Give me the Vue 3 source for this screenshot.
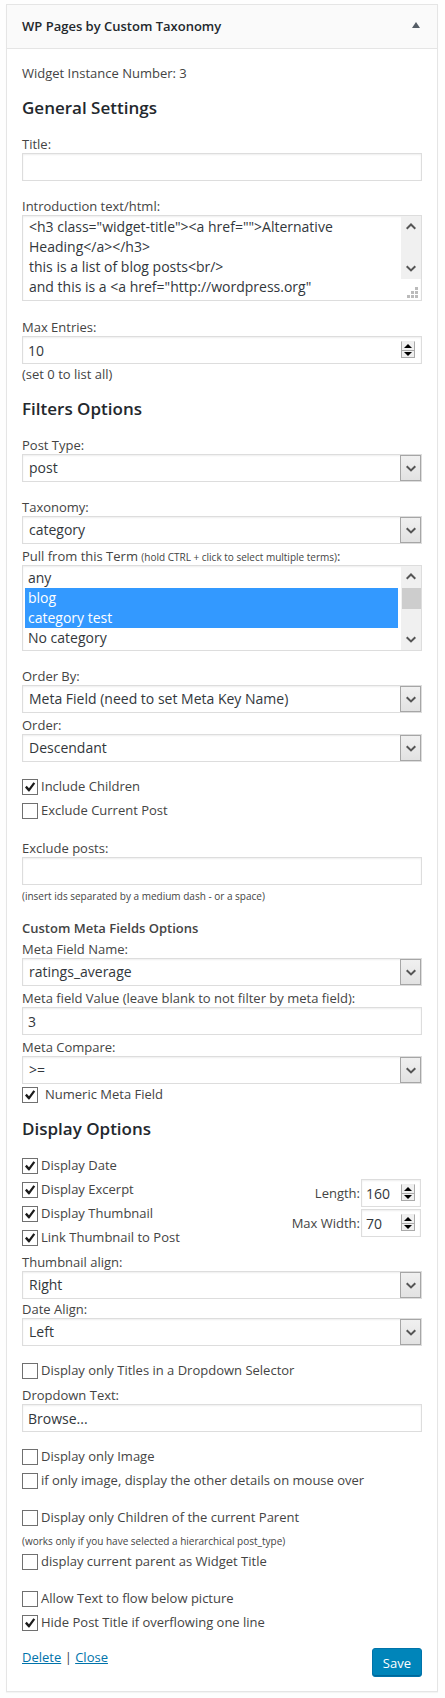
<script setup>
import { h, reactive } from 'vue'

const form = reactive({
  title: '',
  intro: '<h3 class="widget-title"><a href="">Alternative Heading</a></h3>\nthis is a list of blog posts<br/>\nand this is a <a href="http://wordpress.org"',
  maxEntries: 10,
  postType: 'post',
  taxonomy: 'category',
  terms: ['blog', 'category test'],
  orderBy: 'Meta Field (need to set Meta Key Name)',
  order: 'Descendant',
  includeChildren: true,
  excludeCurrent: false,
  excludePosts: '',
  metaName: 'ratings_average',
  metaValue: '3',
  metaCompare: '>=',
  numericMeta: true,
  showDate: true,
  showExcerpt: true,
  showThumb: true,
  linkThumb: true,
  length: 160,
  maxWidth: 70,
  thumbAlign: 'Right',
  dateAlign: 'Left',
  dropdown: false,
  dropdownText: 'Browse...',
  onlyImage: false,
  mouseOver: false,
  onlyChildren: false,
  parentTitle: false,
  flowText: false,
  hideTitle: true
})

const terms = ['any', 'blog', 'category test', 'No category']

const Chevron = (props) =>
  h('svg', { width: 10, height: 7, viewBox: '0 0 10 7', 'aria-hidden': 'true' }, [
    h('path', {
      d: props.up ? 'M0.7 5.7 5 1.5 9.3 5.7' : 'M0.7 1.2 5 5.4 9.3 1.2',
      fill: 'none',
      stroke: '#555',
      'stroke-width': 2
    })
  ])
Chevron.props = { up: Boolean }

const Tick = () =>
  h('svg', { class: 'tick', width: 12, height: 12, viewBox: '0 0 12 12', 'aria-hidden': 'true' }, [
    h('path', { d: 'M1 6.4 2.7 4.8 5 7.2 9.4 1.3 11.2 2.6 5.4 10.4 4.5 10.4Z', fill: '#1c1c1c' })
  ])

const Triangle = (props) =>
  h('svg', { width: 8, height: 4, viewBox: '0 0 8 4', 'aria-hidden': 'true' }, [
    h('path', { d: props.up ? 'M0 4 4 0 8 4Z' : 'M0 0H8L4 4Z', fill: '#000' })
  ])
Triangle.props = { up: Boolean }
</script>

<template>
  <main class="page">
    <section class="widget">
      <header class="widget-top">
        <h2>WP Pages by Custom Taxonomy</h2>
        <button type="button" class="toggle" aria-label="Collapse widget">
          <svg width="8" height="6" viewBox="0 0 8 6" aria-hidden="true"><path d="M0 6 4 0 8 6Z" fill="#555d66" /></svg>
        </button>
      </header>

      <form class="widget-body" @submit.prevent>
        <p>Widget Instance Number: 3</p>

        <h3>General Settings</h3>
        <div class="field">
          <label for="title">Title:</label>
          <input id="title" v-model="form.title" class="control" type="text" />
        </div>
        <div class="field spaced">
          <label for="intro">Introduction text/html:</label>
          <div class="box">
            <textarea id="intro" v-model="form.intro" class="control" rows="4" spellcheck="false"></textarea>
            <span class="scroll above-grip"><Chevron up /><Chevron /></span>
            <svg class="grip" width="11" height="11" viewBox="0 0 11 11" aria-hidden="true">
              <path d="M8 0h3v3h-3zM4 4h3v3h-3zM8 4h3v3h-3zM0 8h3v3h-3zM4 8h3v3h-3zM8 8h3v3h-3z" fill="#bbb" />
            </svg>
          </div>
        </div>
        <div class="field entries">
          <label for="max">Max Entries:</label>
          <div class="box">
            <input id="max" v-model="form.maxEntries" class="control" type="number" />
            <span class="spinner"><i><Triangle up /></i><i><Triangle /></i></span>
          </div>
          <p class="hint">(set 0 to list all)</p>
        </div>

        <h3>Filters Options</h3>
        <div class="field">
          <label for="ptype">Post Type:</label>
          <div class="box">
            <select id="ptype" v-model="form.postType" class="control"><option>post</option></select>
            <span class="arrow"><Chevron /></span>
          </div>
        </div>
        <div class="field spaced">
          <label for="tax">Taxonomy:</label>
          <div class="box">
            <select id="tax" v-model="form.taxonomy" class="control"><option>category</option></select>
            <span class="arrow"><Chevron /></span>
          </div>
        </div>
        <div class="field tight">
          <label for="terms">Pull from this Term <small>(hold CTRL + click to select multiple terms)</small>:</label>
          <div class="box">
            <select id="terms" v-model="form.terms" class="control list" multiple size="4">
              <option v-for="t in terms" :key="t">{{ t }}</option>
            </select>
            <span class="scroll"><Chevron up /><span class="thumb"></span><Chevron /></span>
          </div>
        </div>
        <div class="field spaced">
          <label for="orderby">Order By:</label>
          <div class="box">
            <select id="orderby" v-model="form.orderBy" class="control"><option>Meta Field (need to set Meta Key Name)</option></select>
            <span class="arrow"><Chevron /></span>
          </div>
        </div>
        <div class="field tight">
          <label for="order">Order:</label>
          <div class="box">
            <select id="order" v-model="form.order" class="control"><option>Descendant</option></select>
            <span class="arrow"><Chevron /></span>
          </div>
        </div>

        <div class="checks">
          <label class="check"><span class="tickbox"><input v-model="form.includeChildren" type="checkbox" /><Tick v-if="form.includeChildren" /></span>Include Children</label>
          <label class="check"><span class="tickbox"><input v-model="form.excludeCurrent" type="checkbox" /><Tick v-if="form.excludeCurrent" /></span>Exclude Current Post</label>
        </div>

        <div class="field wide">
          <label for="exclude">Exclude posts:</label>
          <input id="exclude" v-model="form.excludePosts" class="control" type="text" />
          <p class="note">(insert ids separated by a medium dash - or a space)</p>
        </div>

        <h4>Custom Meta Fields Options</h4>
        <div class="field tight">
          <label for="mname">Meta Field Name:</label>
          <div class="box">
            <select id="mname" v-model="form.metaName" class="control"><option>ratings_average</option></select>
            <span class="arrow"><Chevron /></span>
          </div>
        </div>
        <div class="field tight">
          <label for="mvalue">Meta field Value (leave blank to not filter by meta field):</label>
          <input id="mvalue" v-model="form.metaValue" class="control" type="text" />
        </div>
        <div class="field tight">
          <label for="mcompare">Meta Compare:</label>
          <div class="box">
            <select id="mcompare" v-model="form.metaCompare" class="control"><option>&gt;=</option></select>
            <span class="arrow"><Chevron /></span>
          </div>
        </div>
        <label class="check numeric"><span class="tickbox"><input v-model="form.numericMeta" type="checkbox" /><Tick v-if="form.numericMeta" /></span>Numeric Meta Field</label>

        <h3>Display Options</h3>
        <div class="display">
          <div class="stack">
            <label class="check"><span class="tickbox"><input v-model="form.showDate" type="checkbox" /><Tick v-if="form.showDate" /></span>Display Date</label>
            <label class="check"><span class="tickbox"><input v-model="form.showExcerpt" type="checkbox" /><Tick v-if="form.showExcerpt" /></span>Display Excerpt</label>
            <label class="check"><span class="tickbox"><input v-model="form.showThumb" type="checkbox" /><Tick v-if="form.showThumb" /></span>Display Thumbnail</label>
            <label class="check"><span class="tickbox"><input v-model="form.linkThumb" type="checkbox" /><Tick v-if="form.linkThumb" /></span>Link Thumbnail to Post</label>
          </div>
          <div class="sizes">
            <div class="size">
              <label for="len">Length:</label>
              <div class="box small">
                <input id="len" v-model="form.length" class="control" type="number" />
                <span class="spinner"><i><Triangle up /></i><i><Triangle /></i></span>
              </div>
            </div>
            <div class="size">
              <label for="mw">Max Width:</label>
              <div class="box small">
                <input id="mw" v-model="form.maxWidth" class="control" type="number" />
                <span class="spinner"><i><Triangle up /></i><i><Triangle /></i></span>
              </div>
            </div>
          </div>
        </div>

        <div class="field after-checks">
          <label for="talign">Thumbnail align:</label>
          <div class="box">
            <select id="talign" v-model="form.thumbAlign" class="control"><option>Right</option></select>
            <span class="arrow"><Chevron /></span>
          </div>
        </div>
        <div class="field joined">
          <label for="dalign">Date Align:</label>
          <div class="box">
            <select id="dalign" v-model="form.dateAlign" class="control"><option>Left</option></select>
            <span class="arrow"><Chevron /></span>
          </div>
        </div>

        <div class="checks">
          <label class="check"><span class="tickbox"><input v-model="form.dropdown" type="checkbox" /><Tick v-if="form.dropdown" /></span>Display only Titles in a Dropdown Selector</label>
        </div>
        <div class="field after-checks">
          <label for="dtext">Dropdown Text:</label>
          <input id="dtext" v-model="form.dropdownText" class="control" type="text" />
        </div>

        <div class="checks">
          <label class="check"><span class="tickbox"><input v-model="form.onlyImage" type="checkbox" /><Tick v-if="form.onlyImage" /></span>Display only Image</label>
          <label class="check"><span class="tickbox"><input v-model="form.mouseOver" type="checkbox" /><Tick v-if="form.mouseOver" /></span>if only image, display the other details on mouse over</label>
        </div>
        <div class="checks parents">
          <label class="check"><span class="tickbox"><input v-model="form.onlyChildren" type="checkbox" /><Tick v-if="form.onlyChildren" /></span>Display only Children of the current Parent</label>
          <p class="note">(works only if you have selected a hierarchical post_type)</p>
          <label class="check"><span class="tickbox"><input v-model="form.parentTitle" type="checkbox" /><Tick v-if="form.parentTitle" /></span>display current parent as Widget Title</label>
        </div>
        <div class="checks further">
          <label class="check"><span class="tickbox"><input v-model="form.flowText" type="checkbox" /><Tick v-if="form.flowText" /></span>Allow Text to flow below picture</label>
          <label class="check"><span class="tickbox"><input v-model="form.hideTitle" type="checkbox" /><Tick v-if="form.hideTitle" /></span>Hide Post Title if overflowing one line</label>
        </div>

        <footer class="actions">
          <div><a href="#delete">Delete</a> | <a href="#close">Close</a></div>
          <button type="submit" class="save">Save</button>
        </footer>
      </form>
    </section>
  </main>
</template>

<style>
body {
  margin: 0;
  background: #fefefe;
}
</style>

<style scoped>
.page {
  padding: 4px 7px 6px 6px;
  font: 13px/18px "Open Sans", "Noto Sans", sans-serif;
  color: #444;
}
.page * {
  box-sizing: border-box;
}
.widget {
  background: #fff;
  border: 1px solid #e5e5e5;
  box-shadow: 0 1px 1px rgba(0, 0, 0, 0.04);
}
.widget-top {
  display: flex;
  justify-content: space-between;
  align-items: center;
  padding: 12px 17px 13px 15px;
  background: #fafafa;
  border-bottom: 1px solid #e5e5e5;
}
h2,
h3,
h4,
p {
  margin: 0;
}
h2 {
  font-size: 13px;
  line-height: 18px;
  font-weight: 600;
  color: #23282d;
}
.toggle {
  display: flex;
  align-items: flex-start;
  height: 8px;
  padding: 0;
  border: 0;
  background: none;
}
.widget-body {
  padding: 15px 15px 14px;
}
h3 {
  margin: 14px 0 15px;
  font-size: 17px;
  line-height: 24px;
  font-weight: 600;
  color: #23282d;
}
h4 {
  margin-top: 14px;
  font-size: 13px;
  line-height: 18px;
  font-weight: 600;
}
.field > label {
  display: block;
}
.spaced {
  margin-top: 16px;
}
.entries {
  margin-top: 17px;
}
.tight {
  margin-top: 3px;
}
.wide {
  margin-top: 20px;
}
.after-checks {
  margin-top: 7px;
}
.hint,
.joined,
.numeric {
  margin-top: 1px;
}
small,
.note {
  font-size: 10px;
}
small {
  line-height: 1;
}
.field .note {
  margin-top: 2px;
}
.box {
  position: relative;
}
.control {
  display: block;
  width: 100%;
  height: 28px;
  margin: 0;
  padding: 3px 5px;
  border: 1px solid #ddd;
  border-radius: 0;
  background: #fff;
  box-shadow: inset 0 1px 2px rgba(0, 0, 0, 0.07);
  color: #32373c;
  font: 14px/20px "Open Sans", "Noto Sans", sans-serif;
  appearance: none;
  outline: none;
}
select.control {
  padding: 3px 24px 3px 6px;
}
textarea.control {
  height: auto;
  padding: 1px 24px 3px 6px;
  resize: none;
  overflow: auto;
  scrollbar-width: none;
}
select.list {
  height: auto;
  padding: 2px 23px 2px 2px;
  overflow: auto;
  scrollbar-width: none;
}
.list option {
  height: 20px;
  min-height: 20px;
  padding: 0 3px;
  line-height: 20px;
}
.list option:checked {
  background: #39f linear-gradient(#39f, #39f);
  color: #fff;
}
input[type="number"] {
  appearance: textfield;
}
.arrow {
  position: absolute;
  top: 1px;
  right: 1px;
  bottom: 1px;
  width: 21px;
  display: grid;
  place-items: center;
  border: 1px solid #a6a6a6;
  background: linear-gradient(#f0f0f0, #e2e2e2);
  pointer-events: none;
}
.scroll {
  position: absolute;
  top: 1px;
  right: 1px;
  bottom: 1px;
  width: 20px;
  display: flex;
  flex-direction: column;
  align-items: center;
  justify-content: space-between;
  padding: 7px 0;
  background: #f0f0f0;
  pointer-events: none;
}
.above-grip {
  bottom: 22px;
}
.thumb {
  width: 19px;
  height: 21px;
  margin-bottom: 20px;
  background: #cdcdcd;
}
.grip {
  position: absolute;
  right: 4px;
  bottom: 3px;
  pointer-events: none;
}
.spinner {
  position: absolute;
  top: 5px;
  right: 7px;
  width: 14px;
  height: 17px;
  display: grid;
  grid-template-rows: 1fr 1fr;
  border: 1px solid #aaa;
  border-top-color: #eee;
  background: #f0f0f0;
  pointer-events: none;
}
.spinner i {
  display: grid;
  place-items: center;
}
.spinner i + i {
  border-top: 1px solid #aaa;
}
.stack,
.checks {
  display: flex;
  flex-direction: column;
  gap: 6px;
}
.checks {
  margin-top: 15px;
}
.checks.parents {
  gap: 0;
  margin-top: 19px;
}
.checks.further {
  margin-top: 19px;
}
.parents .note {
  margin: 6px 0 2px;
}
.check {
  display: flex;
  align-items: flex-end;
  gap: 3px;
  height: 18px;
  line-height: 18px;
}
.check.numeric {
  gap: 7px;
}
.tickbox {
  display: grid;
  place-items: center;
  width: 16px;
  height: 16px;
}
.tickbox > * {
  grid-area: 1 / 1;
}
.tickbox input {
  width: 16px;
  height: 16px;
  margin: 0;
  border: 1px solid #707070;
  background: #fff;
  appearance: none;
}
.tick {
  pointer-events: none;
}
.display {
  display: flex;
  justify-content: space-between;
}
.sizes {
  display: flex;
  flex-direction: column;
  align-items: flex-end;
  gap: 2px;
  padding: 23px 1px 0 0;
}
.size {
  display: flex;
  align-items: center;
  gap: 1px;
}
.small {
  width: 60px;
}
.small .control {
  padding: 3px 4px;
}
.small .spinner {
  right: 6px;
}
.actions {
  display: flex;
  justify-content: space-between;
  align-items: flex-start;
  margin-top: 17px;
}
a {
  color: #0073aa;
}
.save {
  height: 29px;
  padding: 0 10px;
  border: 1px solid #0073aa;
  border-radius: 3px;
  background: #0085ba;
  box-shadow: inset 0 -1px 0 #006799;
  color: #fff;
  font: 13px/26px "Open Sans", "Noto Sans", sans-serif;
}
</style>
